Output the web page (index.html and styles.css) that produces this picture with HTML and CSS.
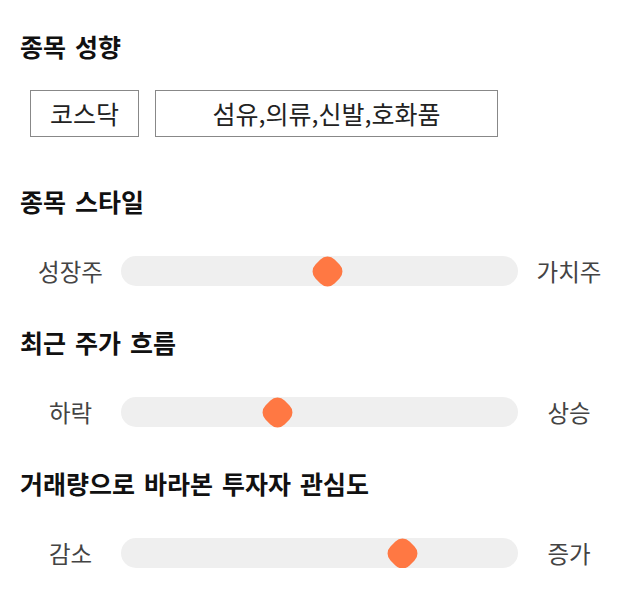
FILE: index.html
```html
<!DOCTYPE html>
<html lang="ko">
<head>
<meta charset="utf-8">
<link rel="stylesheet" href="styles.css">
</head>
<body>
<div class="page">
  <section class="section first">
    <h2 class="title">종목 성향</h2>
    <div class="tags">
      <div class="tag tag-market">코스닥</div>
      <div class="tag tag-wide">섬유,의류,신발,호화품</div>
    </div>
  </section>

  <section class="section after-tags">
    <h2 class="title">종목 스타일</h2>
    <div class="slider-row">
      <span class="label">성장주</span>
      <div class="track"><div class="thumb" style="--v: 52.1%"></div></div>
      <span class="label">가치주</span>
    </div>
  </section>

  <section class="section">
    <h2 class="title">최근 주가 흐름</h2>
    <div class="slider-row">
      <span class="label">하락</span>
      <div class="track"><div class="thumb" style="--v: 39.3%"></div></div>
      <span class="label">상승</span>
    </div>
  </section>

  <section class="section">
    <h2 class="title">거래량으로 바라본 투자자 관심도</h2>
    <div class="slider-row">
      <span class="label">감소</span>
      <div class="track"><div class="thumb" style="--v: 71%"></div></div>
      <span class="label">증가</span>
    </div>
  </section>
</div>
</body>
</html>
```

FILE: styles.css
```css
* { box-sizing: border-box; }

html, body {
  margin: 0;
  padding: 0;
  background: #ffffff;
}

body {
  font-family: "Noto Sans CJK KR", "Noto Sans", sans-serif;
  color: #222;
}

.page {
  padding: 30px 20px 0 20px;
  width: 640px;
}

.section { margin-top: 40px; }
.section.first { margin-top: 0; }
.section.after-tags { margin-top: 48px; }

.title {
  margin: 0;
  font-size: 25px;
  line-height: 32px;
  font-weight: 700;
  color: #111;
  word-spacing: 2px;
}

.tags {
  display: flex;
  gap: 16px;
  margin-top: 28px;
  margin-left: 10px;
}

.tag {
  height: 47px;
  border: 1px solid #888;
  font-size: 25px;
  line-height: 45px;
  text-align: center;
  color: #222;
  white-space: nowrap;
}

.tag-market { width: 109px; }
.tag-wide { width: 343px; }

.slider-row {
  display: grid;
  grid-template-columns: 101px 1fr 102px;
  align-items: center;
  margin-top: 39px;
  height: 30px;
}

.label {
  text-align: center;
  font-size: 23.5px;
  line-height: 30px;
  color: #444;
}

.track {
  position: relative;
  height: 30px;
  background: #efefef;
  border-radius: 15px;
}

.thumb {
  position: absolute;
  top: 1.5px;
  left: calc(var(--v) - 13.5px);
  width: 27px;
  height: 27px;
  background: #ff7843;
  border-radius: 10px;
  transform: rotate(45deg);
}
```
